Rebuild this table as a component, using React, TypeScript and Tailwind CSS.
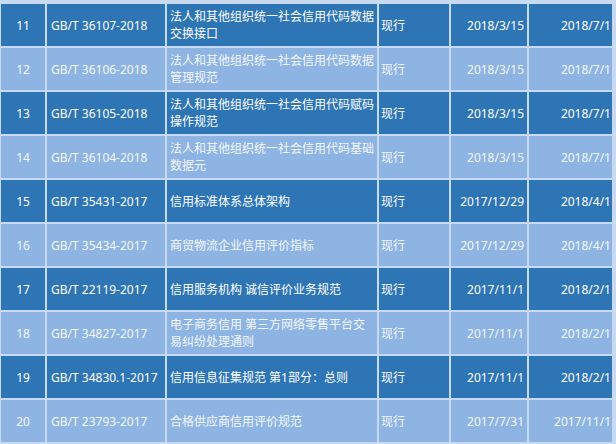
const rows = [
  { no: "11", code: "GB/T 36107-2018", name: ["法人和其他组织统一社会信用代码数据", "交换接口"], d1: "2018/3/15", d2: "2018/7/1" },
  { no: "12", code: "GB/T 36106-2018", name: ["法人和其他组织统一社会信用代码数据", "管理规范"], d1: "2018/3/15", d2: "2018/7/1" },
  { no: "13", code: "GB/T 36105-2018", name: ["法人和其他组织统一社会信用代码赋码", "操作规范"], d1: "2018/3/15", d2: "2018/7/1" },
  { no: "14", code: "GB/T 36104-2018", name: ["法人和其他组织统一社会信用代码基础", "数据元"], d1: "2018/3/15", d2: "2018/7/1" },
  { no: "15", code: "GB/T 35431-2017", name: ["信用标准体系总体架构"], d1: "2017/12/29", d2: "2018/4/1" },
  { no: "16", code: "GB/T 35434-2017", name: ["商贸物流企业信用评价指标"], d1: "2017/12/29", d2: "2018/4/1" },
  { no: "17", code: "GB/T 22119-2017", name: ["信用服务机构 诚信评价业务规范"], d1: "2017/11/1", d2: "2018/2/1" },
  { no: "18", code: "GB/T 34827-2017", name: ["电子商务信用 第三方网络零售平台交", "易纠纷处理通则"], d1: "2017/11/1", d2: "2018/2/1" },
  { no: "19", code: "GB/T 34830.1-2017", name: ["信用信息征集规范 第1部分：总则"], d1: "2017/11/1", d2: "2018/2/1" },
  { no: "20", code: "GB/T 23793-2017", name: ["合格供应商信用评价规范"], d1: "2017/7/31", d2: "2017/11/1" },
];

export default function App() {
  return (
    <div
      className="w-[616px] h-[444px] overflow-hidden bg-[#c8daf1] pt-[4px] pl-[1px] text-[12px] leading-[17px]"
      style={{ fontFamily: '"Noto Sans", "Noto Sans CJK SC", sans-serif' }}
    >
      <div className="w-[613px] grid grid-cols-[44px_118px_210px_70px_76px_83px] auto-rows-[42px] gap-[2px]">
        {rows.map((r, i) => {
          // odd rows dark, even rows light
          const cell =
            i % 2 === 0
              ? "bg-[#2e75b6] text-white"
              : "bg-[#8db4e2] text-[#f3f7fc]";
          return [
            <div key={r.no + "a"} className={`${cell} flex items-center justify-center`}>
              {r.no}
            </div>,
            <div key={r.no + "b"} className={`${cell} flex items-center pl-[4px] whitespace-nowrap`}>
              {r.code}
            </div>,
            <div key={r.no + "c"} className={`${cell} flex flex-col justify-center pl-[3px] whitespace-nowrap`}>
              {r.name.map((line) => (
                <span key={line}>{line}</span>
              ))}
            </div>,
            <div key={r.no + "d"} className={`${cell} flex items-center pl-[2px]`}>
              现行
            </div>,
            <div key={r.no + "e"} className={`${cell} flex items-center justify-end pr-[3px]`}>
              {r.d1}
            </div>,
            <div key={r.no + "f"} className={`${cell} flex items-center justify-end pr-[1px] overflow-hidden whitespace-nowrap`}>
              {r.d2}
            </div>,
          ];
        })}
      </div>
    </div>
  );
}
